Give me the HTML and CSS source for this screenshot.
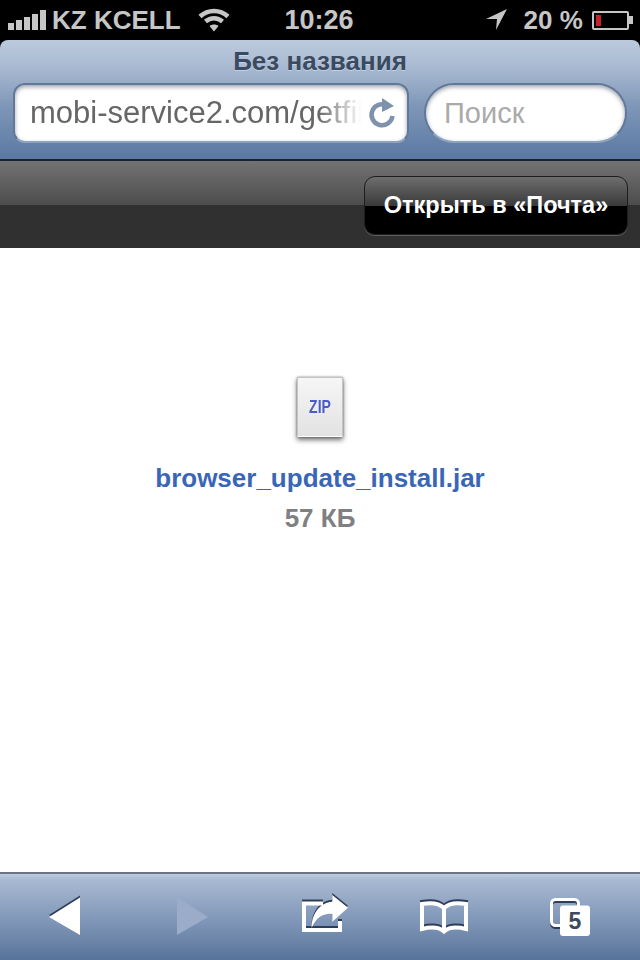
FILE: index.html
```html
<!DOCTYPE html>
<html lang="ru">
<head>
    <meta charset="UTF-8">
    <title>Без названия</title>
    <link rel="stylesheet" href="styles.css">
</head>
<body>
    <!-- status bar -->
    <div class="status-bar">
        <svg class="signal" width="40" height="20" viewBox="0 0 40 20">
            <rect x="0" y="13" width="6" height="7"/>
            <rect x="8" y="10" width="6" height="10"/>
            <rect x="16" y="7" width="6" height="13"/>
            <rect x="24" y="4" width="6" height="16"/>
            <rect x="32" y="0" width="6" height="20"/>
        </svg>
        <span class="carrier">KZ KCELL</span>
        <svg class="wifi" width="32" height="24" viewBox="0 0 32 24">
            <path d="M2 8.5C10 1 22 1 30 8.5" />
            <path d="M7.5 13.5C12.5 9 19.5 9 24.5 13.5" />
            <path class="wifi-dot" d="M16 23.5L11.5 18C14 16 18 16 20.5 18Z" />
        </svg>
        <span class="clock">10:26</span>
        <svg class="locate" width="22" height="22" viewBox="0 0 22 22">
            <polygon points="21,0 0,10 11,10 10,21"/>
        </svg>
        <span class="percent">20 %</span>
        <div class="battery"><div class="battery-level"></div></div>
        <div class="battery-nub"></div>
    </div>

    <!-- browser header -->
    <header class="nav-bar">
        <h1 class="page-title">Без названия</h1>
        <div class="nav-fields">
            <div class="field url-field">
                <span class="url-text">mobi-service2.com/getfil</span>
                <svg class="reload" width="30" height="32" viewBox="0 0 30 32">
                    <path d="M20 8.5A10.5 10.5 0 1 0 25.5 19" />
                    <polygon class="reload-head" points="15,1 27,9 15,15"/>
                </svg>
            </div>
            <div class="field search-field">Поиск</div>
        </div>
    </header>

    <!-- open in toolbar -->
    <div class="open-bar">
        <button class="open-btn">Открыть в «Почта»</button>
    </div>

    <!-- file preview -->
    <main class="preview">
        <div class="file-icon"><span>ZIP</span></div>
        <div class="file-name">browser_update_install.jar</div>
        <div class="file-size">57 КБ</div>
    </main>

    <!-- bottom toolbar -->
    <nav class="tool-bar">
        <svg class="tool shadowed" width="64" height="48" viewBox="0 0 64 48">
            <polygon points="17,24 48,4.5 48,42"/>
        </svg>
        <svg class="tool tool-off" width="64" height="48" viewBox="0 0 64 48">
            <polygon points="17,4 48,24 17,42"/>
        </svg>
        <svg class="tool shadowed" width="64" height="48" viewBox="0 0 64 48">
            <path class="line" d="M35 10.5H16V37H52V28" />
            <path d="M44.3 2L60 14.7L44.3 28.7V21C35 20 28 25 23.7 34.7C23 22 32 9 44.3 8.7Z"/>
        </svg>
        <svg class="tool shadowed" width="64" height="48" viewBox="0 0 64 48">
            <path class="line" d="M28 15C23 10 14 9.500 6 11V36C14 34 23 34 28 38.500C33 34 42 34 50 36V11C42 9.500 33 10 28 15V37" />
        </svg>
        <svg class="tool" width="64" height="48" viewBox="0 0 64 48">
            <rect class="tab-back" x="7.500" y="6.500" width="27" height="26" rx="4"/>
            <rect class="tab-front" x="16" y="12.500" width="30" height="30.500" rx="3"/>
            <text class="tab-count" x="31" y="36">5</text>
        </svg>
    </nav>
</body>
</html>
```

FILE: styles.css
```css
* {
    margin: 0;
    padding: 0;
    box-sizing: border-box;
}

html, body {
    width: 640px;
    height: 960px;
    overflow: hidden;
}

body {
    display: flex;
    flex-direction: column;
    background: #000;
    font-family: "Liberation Sans", Arial, sans-serif;
}

/* ===== status bar ===== */
.status-bar {
    height: 40px;
    flex: none;
    display: flex;
    align-items: center;
    padding-left: 8px;
    color: #c6c6c6;
    font-size: 26px;
    font-weight: bold;
    background: #000;
}

.signal { fill: #c6c6c6; }

.carrier { margin-left: 4px; }

.wifi {
    margin-left: 17px;
    fill: none;
    stroke: #c6c6c6;
    stroke-width: 4.5;
}

.wifi-dot {
    fill: #c6c6c6;
    stroke: none;
}

.clock {
    margin-left: 55px;
    font-size: 27px;
}

.locate {
    margin-left: 132px;
    fill: #c6c6c6;
}

.percent { margin-left: 16px; }

.battery {
    margin-left: 9px;
    width: 37px;
    height: 19px;
    padding: 2px;
    border: 2px solid #c6c6c6;
    border-radius: 2px;
}

.battery-level {
    width: 5px;
    height: 11px;
    background: #c4222a;
}

.battery-nub {
    width: 4px;
    height: 8px;
    background: #c6c6c6;
}

/* ===== nav bar ===== */
.nav-bar {
    height: 121px;
    flex: none;
    padding: 7px 13px 0;
    border-radius: 8px 8px 0 0;
    border-bottom: 2px solid #18202e;
    background: linear-gradient(#bccadd, #a6b8d0 25%, #7f97b8 55%, #5a78a2);
}

.page-title {
    height: 28px;
    line-height: 28px;
    text-align: center;
    font-size: 26px;
    font-weight: bold;
    color: #3a4a60;
    text-shadow: 0 1px 0 rgba(255,255,255,0.35);
}

.nav-fields {
    display: flex;
    gap: 15px;
    margin-top: 8px;
}

.field {
    height: 60px;
    display: flex;
    align-items: center;
    background: #fff;
    border: 2px solid #62789a;
    border-bottom-color: #8ea3c0;
    box-shadow: inset 0 2px 4px rgba(40,50,70,0.45);
    font-size: 31px;
}

.url-field {
    width: 396px;
    padding: 0 10px 0 15px;
    border-radius: 12px;
    color: #666;
}

.url-text {
    flex: 1;
    min-width: 0;
    white-space: nowrap;
    -webkit-mask-image: linear-gradient(to right, #000 86%, transparent 99%);
    mask-image: linear-gradient(to right, #000 86%, transparent 99%);
}

.reload {
    flex: none;
    margin-left: 2px;
    fill: none;
    stroke: #7e93ab;
    stroke-width: 4.5;
}

.reload-head {
    fill: #7e93ab;
    stroke: none;
}

.search-field {
    width: 203px;
    padding-left: 18px;
    border-radius: 30px;
    color: #aaa;
    font-size: 29px;
}

/* ===== open in toolbar ===== */
.open-bar {
    height: 87px;
    flex: none;
    display: flex;
    justify-content: flex-end;
    padding: 15px 12px 0 0;
    background: linear-gradient(#737373, #4c4c4c 51%, #303030 51%, #303030);
}

.open-btn {
    width: 264px;
    height: 59px;
    border: 1px solid #1e1e1e;
    border-radius: 11px;
    box-shadow: 0 1px 0 #5c5c5c;
    background: linear-gradient(#6e6e6e, #3a3a3a 50%, #000 50%, #000);
    color: #fff;
    font-family: inherit;
    font-size: 23.5px;
    font-weight: bold;
}

/* ===== file preview ===== */
.preview {
    flex: 1;
    display: flex;
    flex-direction: column;
    align-items: center;
    padding-top: 129px;
    background: #fff;
}

.file-icon {
    width: 46px;
    height: 60px;
    display: flex;
    align-items: center;
    justify-content: center;
    background: linear-gradient(#f6f6f6, #e2e2e2);
    border: 1px solid #c4c4c4;
    border-bottom-color: #fff;
    box-shadow: 0 3px 5px rgba(0,0,0,0.55), 0 0 2px rgba(0,0,0,0.4);
}

.file-icon span {
    color: #4a5cc8;
    font-size: 18px;
    font-weight: bold;
    transform: scaleX(0.78);
}

.file-name {
    margin-top: 26px;
    line-height: 30px;
    font-size: 26px;
    font-weight: bold;
    color: #3a66b8;
}

.file-size {
    margin-top: 10px;
    line-height: 30px;
    font-size: 26px;
    font-weight: bold;
    color: #808080;
}

/* ===== bottom toolbar ===== */
.tool-bar {
    height: 88px;
    flex: none;
    display: grid;
    grid-template-columns: repeat(5, 128px);
    justify-items: center;
    align-items: center;
    border-top: 2px solid #6a7284;
    background: linear-gradient(#c0cde0, #a9bad2 6%, #7f96b7 55%, #587399);
}

.tool { fill: #fff; }

.shadowed { filter: drop-shadow(0 -2px 0 #2f3e58); }

.tool-off { fill: #9aacc8; }

.line {
    fill: none;
    stroke: #fff;
    stroke-width: 4;
}

.tab-back {
    fill: none;
    stroke: #fff;
    stroke-width: 3;
    filter: drop-shadow(0 2px 0 #2f3e58);
}

.tab-front { fill: #fff; }

.tab-count {
    font-family: "Liberation Sans", Arial, sans-serif;
    font-size: 23px;
    font-weight: bold;
    fill: #3c4a5c;
    text-anchor: middle;
}
```
